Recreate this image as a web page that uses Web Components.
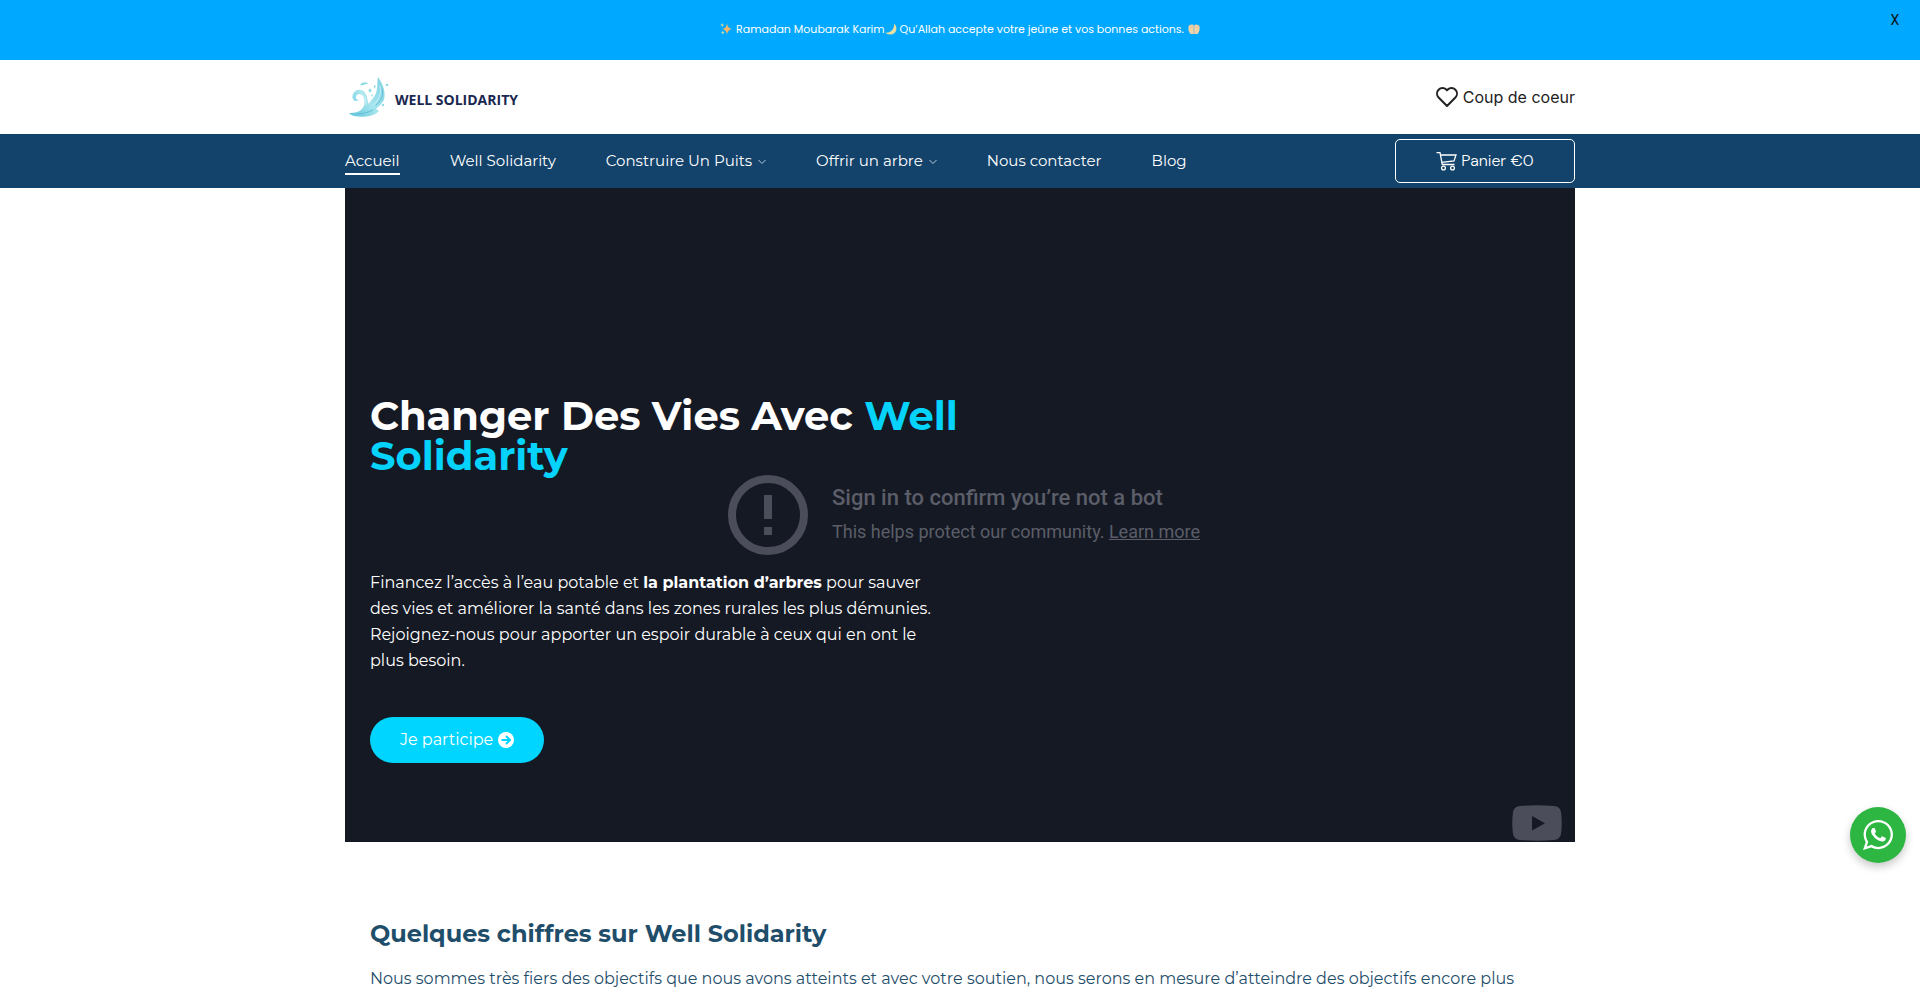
<!DOCTYPE html>
<html lang="fr">
<head>
<meta charset="utf-8">
<meta name="viewport" content="width=device-width, initial-scale=1">
<title>Well Solidarity</title>
<style>
body{margin:0;background:#fff;font-family:Montserrat,Inter,sans-serif;font-size:16px;color:#1f4e6b;overflow-x:hidden}
</style>
</head>
<body>
<promo-banner>
  <svg slot="start" viewBox="0 0 12 12" width="12" height="12" aria-hidden="true"><path d="M7 0.5Q7.6 5 11.8 6Q7.6 7 7 11.5Q6.4 7 2.6 6Q6.4 5 7 .5Z" fill="#f2b66a"/><path d="M2.2 0Q2.4 1.7 4 2.1Q2.4 2.5 2.2 4.2Q2 2.5.4 2.1Q2 1.7 2.2 0ZM2.8 7.5Q3 9.2 4.6 9.6Q3 10 2.8 11.8Q2.6 10 1 9.6Q2.6 9.2 2.8 7.5Z" fill="#c9d8a8"/></svg>
  <span>Ramadan Moubarak Karim</span>
  <svg slot="moon" viewBox="0 0 12 12" width="12" height="12" aria-hidden="true"><path d="M9 .4C13 4 11.8 9.700 7.600 11.200C4.700 12.200 1.600 11.300 .3 9.600C6 10.300 9.800 6 9 .4Z" fill="#e9dfa2"/></svg>
  <span slot="wish">Qu’Allah accepte votre jeûne et vos bonnes actions.</span>
  <svg slot="end" viewBox="0 0 12 12" width="12" height="12" aria-hidden="true"><path d="M5.800 11H2.600C1 9.600 0 7 .5 3.600C1 2 4.800.6 5.800 2.600ZM6.200 11H9.400C11 9.600 12 7 11.500 3.600C11 2 7.200.6 6.200 2.600Z" fill="#f3d3a6"/><path d="M2.400 5.500V3M4.200 5V2.400M7.800 5V2.400M9.600 5.500V3" stroke="#dfb98a" stroke-width=".5"/></svg>
</promo-banner>
<site-header></site-header>
<site-nav>
  <nav-item current href="#accueil">Accueil</nav-item>
  <nav-item href="#well">Well Solidarity</nav-item>
  <nav-item href="#puits" menu>Construire Un Puits</nav-item>
  <nav-item href="#arbre" menu>Offrir un arbre</nav-item>
  <nav-item href="#contact">Nous contacter</nav-item>
  <nav-item href="#blog">Blog</nav-item>
</site-nav>
<main>
  <hero-banner>
    <video-notice slot="backdrop"></video-notice>
    <span slot="title">Changer Des Vies Avec</span>
    <span slot="brand">Well Solidarity</span>
    <span>Financez l’accès à l’eau potable et <strong>la plantation d’arbres</strong> pour sauver des vies et améliorer la santé dans les zones rurales les plus démunies. Rejoignez-nous pour apporter un espoir durable à ceux qui en ont le plus besoin.</span>
    <span slot="action">Je participe</span>
  </hero-banner>
  <figures-intro>
    <span slot="title">Quelques chiffres sur Well Solidarity</span>
    Nous sommes très fiers des objectifs que nous avons atteints et avec votre soutien, nous serons en mesure d’atteindre des objectifs encore plus
  </figures-intro>
</main>
<chat-button></chat-button>

<script>
class Base extends HTMLElement {
  connectedCallback() {
    if (this.shadowRoot) return;
    this.attachShadow({ mode: 'open' }).innerHTML = '<style>*{box-sizing:border-box}:host{display:block}.wrap{width:100%;max-width:1230px;margin:0 auto}a{color:inherit;text-decoration:none}</style>' + this.view();
  }
}

customElements.define('promo-banner', class extends Base {
  view() { return `<style>
:host{position:relative;background:#00a8ff;color:#fff;font-family:Poppins,Inter,sans-serif;font-size:11px}
p{margin:0;height:60px;padding-bottom:2px;display:flex;align-items:center;justify-content:center;line-height:20px}
.a{margin:0 0 0 4px}.b{margin:0 4px 0 3px}
button{position:absolute;top:10px;right:20px;border:0;background:none;padding:0;width:10px;height:20px;font:14px/20px Roboto,sans-serif;color:#111;cursor:pointer}
</style><p><slot name="start"></slot><span class="a"><slot></slot></span><slot name="moon"></slot><span class="b"><slot name="wish"></slot></span><slot name="end"></slot></p><button aria-label="Fermer">X</button>`; }
});

customElements.define('site-logo', class extends Base {
  view() { return `<style>
a{display:flex;align-items:center;color:#1b2850;font:700 14px/20px "Open Sans",sans-serif;gap:6px;padding-top:2px;white-space:nowrap}
span{padding-top:4px}
svg{display:block}
</style><a href="#accueil"><svg width="44" height="46" viewBox="0 0 44 46" aria-hidden="true">
<defs><linearGradient id="g" x1="0" x2="1" y1="1" y2="0"><stop stop-color="#5cc3da"/><stop offset=".45" stop-color="#a5e5ee"/><stop offset="1" stop-color="#7fd0e1"/></linearGradient></defs>
<path fill="url(#g)" d="M4 38C10 38 14 37 17 34C20 31 20 27 19 23C18 19 14 18 12 20C10 22 11 25 14 25C10 28 6 24 8 19C10 14 17 13 20 18C23 22 22 26 24 29C26 25 29 23 31 18C33 12 32 6 33 2C38 9 41 17 39 25C37 29 33 32 31 34L34 36C30 41 18 43 9 41C6 40 5 39 4 38Z"/>
<path fill="none" stroke="#d3f3f7" stroke-width=".8" stroke-linecap="round" d="M35 11C37 18 34 25 28 30M15 16C20 18 21 24 21 30"/>
<path fill="none" stroke="#62bfd6" stroke-width="1" stroke-linecap="round" d="M11 39C17 39 22 38 28 35M37 14C39 21 36 26 31 30"/>
<path fill="#8fdbe6" d="M15 10C17 6 22 7 24 9C21 8 19 11 15 10ZM24 14C26 13 27 15 26 17C24 18 23 16 24 14ZM29 10L31 11L29 14ZM26 20L28 19L27 22Z"/><circle cx="42" cy="10" r="1.300" fill="#8fdbe6"/><circle cx="38" cy="30" r="1.200" fill="#8fdbe6"/></svg><span>WELL SOLIDARITY</span></a>`; }
});

customElements.define('site-header', class extends Base {
  view() { return `<style>
.wrap{height:74px;display:flex;align-items:center;justify-content:space-between}
.fav{display:flex;align-items:center;gap:4px;color:#222;font:16px/24px Inter,sans-serif}
svg{display:block}
</style><header class="wrap"><site-logo></site-logo><a class="fav" href="#favoris"><svg width="24" height="24" viewBox="0 0 24 24" fill="none" stroke="#222" stroke-width="2" stroke-linejoin="round" aria-hidden="true"><path d="M12 21L3.600 12.500C1.500 10.200 1.500 6.800 3.600 4.700C5.800 2.500 9.200 2.500 11.200 4.500L12 5.300L12.800 4.500C14.800 2.500 18.200 2.500 20.400 4.700C22.500 6.800 22.500 10.200 20.400 12.500Z"/></svg>Coup de coeur</a></header>`; }
});

customElements.define('nav-item', class extends Base {
  view() { const menu = this.hasAttribute('menu'); return `<style>
a{display:flex;align-items:center;gap:6px;font-size:15px;line-height:24px;white-space:nowrap;border-bottom:2px solid transparent;padding:2px 0 0}
:host([current]) a{border-color:#fff}
svg{display:block}
</style><a href="${this.getAttribute('href')}"><span><slot></slot></span>${menu ? '<svg width="8" height="8" viewBox="0 0 8 8" fill="none" stroke="#b7cad9" aria-hidden="true"><path d="M.5 3L4 6.500L7.500 3"/></svg>' : ''}</a>`; }
});

customElements.define('site-nav', class extends Base {
  view() { return `<style>
:host{background:#13436b;color:#fff}
.wrap{height:54px;display:flex;align-items:center;justify-content:space-between}
nav{display:flex;gap:50px}
.cart{display:flex;align-items:center;justify-content:center;gap:4px;width:180px;height:44px;border:1px solid #fff;border-radius:5px;font:300 16px/24px "DM Sans",Inter,sans-serif}
svg{display:block}
</style><div class="wrap"><nav><slot></slot></nav><a class="cart" href="#panier"><svg width="21" height="20" viewBox="0 0 21 20" fill="none" stroke="#fff" stroke-width="1.300" aria-hidden="true"><path d="M.5 1.700H4L6.300 13.500H18.500M4.600 4H20L18 10L6 11.400"/><circle cx="7.500" cy="17" r="1.900"/><circle cx="16.500" cy="17" r="1.900"/></svg><span>Panier €0</span></a></div>`; }
});

customElements.define('video-notice', class extends Base {
  view() { return `<style>
:host{height:100%;color:#5b5e68;font:18px/28px Roboto,sans-serif}
.box{height:100%;display:flex;align-items:center;justify-content:center;gap:24px;padding-left:8px}
p{margin:0}h2{margin:0 0 6px;font:500 22px/28px Roboto,sans-serif}
a{text-decoration:underline}
.yt{position:absolute;right:13px;bottom:1px}
svg{display:block}
</style><div class="box"><svg width="80" height="80" viewBox="0 0 80 80" aria-hidden="true"><circle cx="40" cy="40" r="36" fill="none" stroke="#4b4e5a" stroke-width="8"/><path fill="#4b4e5a" d="M36 20h8v24h-8zM36 52h8v8h-8z"/></svg><div><h2>Sign in to confirm you’re not a bot</h2><p>This helps protect our community. <a href="#aide">Learn more</a></p></div></div>
<a class="yt" href="#video" aria-label="YouTube"><svg width="50" height="36" viewBox="0 0 50 36"><path fill="#4b4e5a" fill-rule="evenodd" d="M8 1Q25-.3 42 1Q48 1.500 49 7Q50.500 18 49 29Q48 34.500 42 35Q25 36.300 8 35Q2 34.500 1 29Q-.5 18 1 7Q2 1.500 8 1ZM20 11V25.500L33 18.200Z"/></svg></a>`; }
});

customElements.define('hero-banner', class extends Base {
  view() { return `<style>
.hero{position:relative;background:#151924;color:#fff;min-height:654px;padding:208px 25px 78px}
.back{position:absolute;inset:0}
.copy{position:relative;max-width:590px;display:flex;flex-direction:column;align-items:flex-start}
h1{margin:0;font-weight:700;font-size:40px;line-height:40px}
h1 em{font-style:normal;color:#05d3fb}
p{margin:94px 0 43px;max-width:566px;font-size:16px;line-height:26px}
.go{display:flex;align-items:center;gap:5px;height:46px;padding:0 30px;border-radius:23px;background:#00d5ff;font-size:16px;line-height:24px}
svg{display:block}
</style><section class="hero wrap"><div class="back"><slot name="backdrop"></slot></div><div class="copy"><h1><slot name="title"></slot> <em><slot name="brand"></slot></em></h1><p><slot></slot></p><a class="go" href="#participer"><slot name="action"></slot><svg width="16" height="16" viewBox="0 0 16 16" aria-hidden="true"><circle cx="8" cy="8" r="8" fill="#fff"/><path d="M3.500 8H12M8 4L12 8L8 12" fill="none" stroke="#00d5ff" stroke-width="2"/></svg></a></div></section>`; }
});

customElements.define('figures-intro', class extends Base {
  view() { return `<style>
.wrap{padding:80px 25px 0}
h2{margin:0 0 20px;font-weight:700;font-size:24px;line-height:24px}
p{margin:0;font-size:16px;line-height:26px}
</style><section class="wrap"><h2><slot name="title"></slot></h2><p><slot></slot></p></section>`; }
});

customElements.define('chat-button', class extends Base {
  view() { return `<style>
:host{position:fixed;right:14px;bottom:130px}
button{display:flex;align-items:center;justify-content:center;width:56px;height:56px;padding:0;border:0;border-radius:50%;background:#2db742;box-shadow:0 4px 8px rgba(0,0,0,.22);cursor:pointer}
</style><button aria-label="WhatsApp"><svg width="30" height="30" viewBox="0 0 90 90" fill="#fff" aria-hidden="true"><path fill-rule="evenodd" d="M90 43.841c0 24.213-19.779 43.841-44.182 43.841a44.256 44.256 0 0 1-21.357-5.455L0 90l7.975-23.522a43.380 43.380 0 0 1-6.340-22.637C1.635 19.628 21.416 0 45.818 0 70.223 0 90 19.628 90 43.841zM45.818 6.982c-20.484 0-37.146 16.535-37.146 36.859 0 8.065 2.629 15.534 7.076 21.610L11.107 79.140l14.275-4.537A37.122 37.122 0 0 0 45.819 80.700c20.481 0 37.146-16.533 37.146-36.857S66.301 6.982 45.818 6.982zM68.129 53.938c-.273-.447-.994-.717-2.076-1.254-1.084-.537-6.410-3.138-7.400-3.495-.993-.358-1.717-.538-2.438.537-.721 1.076-2.797 3.495-3.430 4.212-.632.719-1.263.809-2.347.271-1.082-.537-4.571-1.673-8.708-5.333-3.219-2.848-5.393-6.364-6.025-7.441-.631-1.075-.066-1.656.475-2.191.488-.482 1.084-1.255 1.625-1.882.543-.628.723-1.075 1.082-1.793.363-.717.182-1.344-.090-1.883-.270-.537-2.438-5.825-3.340-7.977-.902-2.150-1.803-1.792-2.436-1.792-.631 0-1.354-.090-2.076-.090s-1.896.269-2.889 1.344c-.992 1.076-3.789 3.676-3.789 8.963 0 5.288 3.879 10.397 4.422 11.113.541.716 7.490 11.920 18.500 16.223C58.200 65.771 58.200 64.336 60.186 64.156c1.984-.179 6.406-2.599 7.312-5.107.900-2.512.900-4.663.631-5.111z"/></svg></button>`; }
});
</script>
</body>
</html>
